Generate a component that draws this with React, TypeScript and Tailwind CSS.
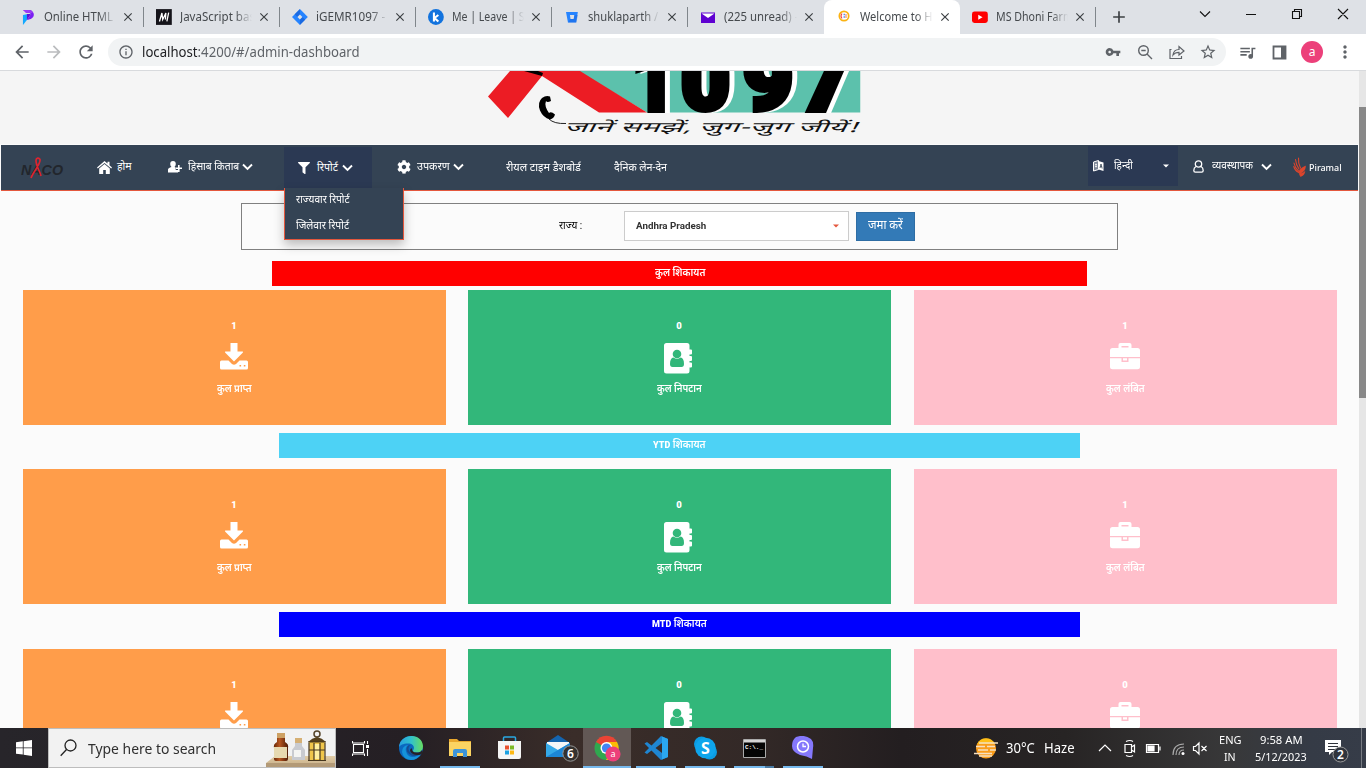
import React, { useLayoutEffect, useRef } from "react";
import {
  MdArrowBack,
  MdArrowForward,
  MdRefresh,
  MdInfoOutline,
  MdVpnKey,
  MdStarBorder,
  MdQueueMusic,
  MdMoreVert,
  MdClose,
  MdAdd,
} from "react-icons/md";
import { FaCog, FaFilter } from "react-icons/fa";

/* Single line of text that is scaled horizontally to fill the given width. */
function Fit({ w, className = "", children }: { w: number; className?: string; children: React.ReactNode }) {
  const ref = useRef<HTMLSpanElement>(null);
  useLayoutEffect(() => {
    const el = ref.current;
    if (!el) return;
    const apply = () => {
      const natural = el.offsetWidth;
      if (natural) el.style.transform = `scaleX(${w / natural})`;
    };
    apply();
    document.fonts?.ready.then(apply);
  }, [w]);
  return (
    <span className={`block shrink-0 ${className}`} style={{ width: w }}>
      <span ref={ref} className="inline-block origin-left whitespace-nowrap">
        {children}
      </span>
    </span>
  );
}

const ui = "font-['Noto_Sans','Open_Sans',sans-serif]";

function Chevron() {
  return (
    <svg width="11" height="8" viewBox="0 0 11 8" className="shrink-0">
      <path d="M1 1.5 5.5 6 10 1.5" fill="none" stroke="#fff" strokeWidth="1.9" />
    </svg>
  );
}

const tabIcons = [
  <svg key="0" width="16" height="16" viewBox="0 0 16 16">
    <path d="M3 1h6.500A4.500 4.500 0 0 1 14 5.500C14 9 11 10.500 7 11l4-6-3-2z" fill="#7b1ff2" />
    <path d="M3 1h6q3 0 4 3H6z" fill="#9a3cf7" />
    <path d="M3 6l5-1-1 6-4 5z" fill="#12a8ff" />
    <path d="M7 5h4l-4 6z" fill="#5a12d8" />
  </svg>,
  <svg key="1" width="16" height="16" viewBox="0 0 16 16">
    <path d="M0 0h16v16H0z" fill="#15141a" />
    <path d="M3.500 12.500 6 4l.8 6.500L10 4l-.5 6.500M12.800 3.500l-1.800 9" fill="none" stroke="#fff" strokeWidth="1.300" />
  </svg>,
  <svg key="2" width="16" height="16" viewBox="0 0 16 16">
    <path d="M8 0l8 8-8 8-8-8z" fill="#2684ff" />
    <path d="M8 0v5.500L5.500 8 2.700 5.300zM8 16v-5.500L10.500 8l2.800 2.700z" fill="#1259cf" opacity=".6" />
    <path d="M8 5.500 10.500 8 8 10.500 5.500 8z" fill="#dee1e6" />
  </svg>,
  <svg key="3" width="16" height="16" viewBox="0 0 16 16">
    <circle cx="8" cy="8" r="8" fill="#1273de" />
    <path d="M6 3.500v9M10.500 6 6.500 9l4 3.500" fill="none" stroke="#fff" strokeWidth="2.100" />
  </svg>,
  <svg key="4" width="16" height="16" viewBox="0 0 16 16">
    <path d="M2 3h12l-1.700 10.500H4z" fill="#2684ff" />
    <path d="M6 6h4.500l-.7 4H6.600z" fill="#dee1e6" />
    <path d="M10.500 6H14l-1.500 7.500H4L6.600 10h3.200z" fill="#1660d6" opacity=".4" />
  </svg>,
  <svg key="5" width="16" height="16" viewBox="0 0 16 16">
    <path d="M1 3.500h14V14H1z" fill="#5f01d1" />
    <path d="M1.500 4.500h13L8 9z" fill="#fff" />
  </svg>,
  <svg key="6" width="16" height="16" viewBox="0 0 16 16">
    <circle cx="8" cy="7" r="4.700" fill="#fff" stroke="#fbb313" strokeWidth="1.700" />
    <path d="M6 4.500q-2 2.500 0 5" fill="none" stroke="#ef4444" strokeWidth="1.100" />
    <path d="M7.500 5.500h1.500M7.500 8h1.500" stroke="#5b8def" strokeWidth="1.300" />
    <path d="M10 5v4" stroke="#ef7d4a" strokeWidth="1" />
  </svg>,
  <svg key="7" width="16" height="16" viewBox="0 0 16 16">
    <rect x="0" y="2.500" width="16" height="11.500" rx="2.500" fill="#f00" />
    <path d="M6.300 5.800v5L10.700 8.300z" fill="#fff" />
  </svg>,
];

const tabs: { t: string; w: number }[] = [
  { t: "Online HTML", w: 69 },
  { t: "JavaScript bas", w: 75 },
  { t: "iGEMR1097 -", w: 69 },
  { t: "Me | Leave | S", w: 73 },
  { t: "shuklaparth /", w: 70 },
  { t: "(225 unread) -", w: 74 },
  { t: "Welcome to H", w: 73 },
  { t: "MS Dhoni Farm", w: 77 },
];

function TabStrip() {
  return (
    <div className="flex h-[34px] bg-[#dee1e6] pl-2">
      {tabs.map((tab, i) => {
        const active = i === 6;
        return (
          <div
            key={tab.t}
            className={`flex h-[34px] w-[136px] shrink-0 items-center pl-3 ${active ? "rounded-t-lg bg-white" : ""}`}
          >
            {tabIcons[i]}
            <div className="ml-2 w-[73px] overflow-hidden [mask-image:linear-gradient(to_right,#000_76%,transparent)]">
              <Fit w={tab.w} className="text-[12px] leading-[18px] text-[#45494d]">
                {tab.t}
              </Fit>
            </div>
            <MdClose className="ml-[5px] h-[14px] w-[14px] shrink-0 text-[#3c4043]" />
            {!active && i !== 5 && <div className="ml-[8px] h-5 w-px shrink-0 bg-[#80868b]" />}
          </div>
        );
      })}
      <MdAdd className="ml-[13px] mt-[7px] h-5 w-5 text-[#3c4043]" />
      <div className="flex-1" />
      <svg width="160" height="34" viewBox="1192 0 160 34" fill="none" stroke="#111" strokeWidth="1.1">
        <path d="M1200 11.5l5 5 5-5" />
        <path d="M1246 14.5h10M1292.5 11.5h7v7h-7zM1294.5 11.500v-2h7v7h-2M1338 9l10 10M1348 9l-10 10" />
      </svg>
      <div className="w-[14px]" />
    </div>
  );
}

function Toolbar() {
  return (
    <div className="flex h-[37px] items-center border-b border-[#d8dadd] bg-white pl-[12px] text-[#5f6368]">
      <MdArrowBack className="h-5 w-5" />
      <MdArrowForward className="ml-3 h-5 w-5 text-[#babcbe]" />
      <MdRefresh className="ml-3 h-5 w-5" />
      <div className="ml-3 flex h-7 w-[1118px] items-center rounded-full bg-[#f1f3f4] pl-[10px] pr-[9px]">
        <MdInfoOutline className="h-4 w-4" />
        <Fit w={218} className="ml-2 text-[14px] leading-5">
          <span className="text-[#202124]">localhost</span>:4200/#/admin-dashboard
        </Fit>
        <div className="flex-1" />
        <MdVpnKey className="h-4 w-4" />
        <svg width="16" height="16" viewBox="0 0 16 16" className="ml-4" fill="none" stroke="#5f6368" strokeWidth="1.4">
          <circle cx="6.5" cy="6.500" r="4.800" />
          <path d="M10 10l5 5M4.300 6.500h4.400" />
        </svg>
        <svg width="16" height="16" viewBox="0 0 16 16" className="ml-4" fill="none" stroke="#5f6368" strokeWidth="1.200">
          <path d="M2.500 5.500H1v9h11.500V12" />
          <path d="M4 11c.5-4 3-5.500 6-5.500V2.500L15 7l-5 4V8.300C7.500 8.300 5.500 9 4 11z" />
        </svg>
        <MdStarBorder className="ml-[14px] h-[18px] w-[18px]" />
      </div>
      <MdQueueMusic className="ml-[12px] h-[19px] w-[19px]" />
      <svg width="15" height="15" viewBox="0 0 15 15" className="ml-[15px]">
        <path d="M1.500 1.500h12v12h-12z" fill="none" stroke="#5f6368" strokeWidth="1.800" />
        <path d="M9 1h5v13H9z" fill="#5f6368" />
      </svg>
      <div className="ml-[14px] flex h-[22px] w-[22px] items-center justify-center rounded-full bg-[#ec407a] pb-px text-[12px] text-white">
        a
      </div>
      <MdMoreVert className="ml-[12px] h-5 w-5" />
    </div>
  );
}

function Banner1097() {
  return (
    <div className="flex h-[73px] bg-[#f5f5f5] pl-[480px]">
      <svg width="390" height="73" viewBox="480 71 390 73">
        <path d="M578 71H860.500V112.500H647z" fill="#5cc1ac" />
        <g
          stroke="#000"
          strokeWidth="6"
          className="font-['Roboto',sans-serif] text-[84px] font-black [filter:drop-shadow(5px_0_0_#fff)]"
        >
          <text x="632" y="109.500" textLength="43" lengthAdjust="spacingAndGlyphs">1</text>
          <text x="681" y="108.500" textLength="49" lengthAdjust="spacingAndGlyphs">0</text>
          <text x="743" y="108.500" textLength="50" lengthAdjust="spacingAndGlyphs">9</text>
          <text x="801" y="109.500" textLength="49" lengthAdjust="spacingAndGlyphs">7</text>
        </g>
        <path d="M860.500 71h10v42h-10z" fill="#f5f5f5" />
        <path d="M510 71H580L647 112.500H599L542 76 508 118 488 96.500z" fill="#ec1c24" />
        <path d="M524 71h14l5 2-1 3z" fill="#000" />
        <path d="M542 98q4-3 8-1.500l1 4.500q-4 2-5 0-2 5 3 12 2-2 6 1.500-1 4-5 5-7-2-10-9-3-8 2-12.500z" fill="#000" />
        <path d="M549 119q5 5 17 4.500" fill="none" stroke="#222" strokeWidth="1" />
        <text
          x="564"
          y="132"
          textLength="294"
          lengthAdjust="spacingAndGlyphs"
          className="font-['Noto_Sans_Devanagari','Noto_Sans',sans-serif] text-[14px] italic"
          fill="#111"
        >
          जानें समझें, जुग-जुग जीयें!
        </text>
      </svg>
    </div>
  );
}

function NavBar() {
  return (
    <nav className="ml-px mt-px flex h-[46px] w-[1357px] border-b border-[#e4573d] bg-[#344354] text-[10.500px] leading-4 text-white">
      <div className="flex w-[96px] items-center pl-[20px]">
        <svg width="43" height="26" viewBox="0 0 43 26">
          <text
            x="0"
            y="19.500"
            textLength="42"
            lengthAdjust="spacingAndGlyphs"
            fill="#22262c"
            className="font-['Liberation_Sans',sans-serif] text-[14px] font-bold italic"
          >
            NACO
          </text>
          <path
            d="M10 23C12 17 20 9 19 4.500c-1-2-4-2-4 1C15 11 19 16 20 21"
            fill="none"
            stroke="#dc2430"
            strokeWidth="1.700"
          />
        </svg>
      </div>
      <div className="flex h-11 w-[71px] items-center">
        <svg width="15" height="13" viewBox="0 0 15 13" className="mr-[5px] shrink-0" fill="#fff">
          <path d="M7.500 0 0 6.500l.8 1L7.500 2l6.700 5.500.8-1L12.500 4.300V.8h-2v1.800zM7.500 3 2.200 7.500V13h4V9h2.600v4h4V7.500z" />
        </svg>
        <Fit w={15}>होम</Fit>
      </div>
      <div className="flex h-11 w-[116px] items-center">
        <svg width="14" height="12" viewBox="0 0 14 12" className="mr-[6px] shrink-0" fill="#fff">
          <path d="M5 0a2.800 3 0 0 1 2.800 3Q7.700 5 6.500 6l1.200.6V9H10v2.500H0V8.500Q0 7 3.500 6 2.200 5 2.200 3A2.800 3 0 0 1 5 0zM10 4h1.600v2.500H14v1.600h-2.400V11H10V8.100H8V6.500h2z" />
        </svg>
        <Fit w={51}>हिसाब किताब</Fit>
        <span className="ml-[3px]"><Chevron /></span>
      </div>
      <div className="relative mt-[2px] flex h-[41px] w-[88px] items-center bg-[#2b3953] pl-[14px]">
        <FaFilter className="mr-[7px] h-3 w-3 shrink-0" />
        <Fit w={21}>रिपोर्ट</Fit>
        <span className="ml-[4px]"><Chevron /></span>
        <div className="absolute left-0 top-[41px] z-10 flex h-[52px] w-[120px] flex-col gap-[10px] border-x border-b border-[#e4573d] bg-[#344354] pl-[11px] pt-1 shadow-[0_5px_10px_rgba(0,0,0,0.25)]">
          <Fit w={54}>राज्यवार रिपोर्ट</Fit>
          <Fit w={53}>जिलेवार रिपोर्ट</Fit>
        </div>
      </div>
      <div className="flex h-11 w-[134px] items-center pl-[25px]">
        <FaCog className="mr-[6px] h-[14px] w-[14px] shrink-0" />
        <Fit w={33}>उपकरण</Fit>
        <span className="ml-[3px]"><Chevron /></span>
      </div>
      <div className="flex h-[45px] w-[108px] items-center">
        <Fit w={75}>रीयल टाइम डैशबोर्ड</Fit>
      </div>
      <div className="flex h-[45px] items-center">
        <Fit w={53}>दैनिक लेन-देन</Fit>
      </div>
      <div className="flex-1" />
      <div className="mt-px flex h-10 w-[90px] items-center bg-[#2b3953] pl-[5px]">
        <svg width="11" height="12" viewBox="0 0 11 12" className="shrink-0">
          <path d="M.5 2 5.500.5v9L.5 11z" fill="#7d8798" stroke="#fff" />
          <path d="M5.500 1 10.500 2.500V11L5.500 9.500z" fill="#fff" />
          <path d="M2 4.500h2M2 6.500h2M3 3.500v4" stroke="#fff" strokeWidth=".7" />
          <path d="M7 8l1-4 1.200 4.500M7.300 6.700H9" stroke="#344354" strokeWidth=".8" fill="none" />
        </svg>
        <Fit w={19} className="ml-[10px]">हिन्दी</Fit>
        <svg width="6" height="4" viewBox="0 0 6 4" className="ml-[30px]">
          <path d="M0 .5h6L3 3.500z" fill="#fff" />
        </svg>
      </div>
      <div className="flex h-[42px] w-[115px] items-center pl-[15px]">
        <svg width="11" height="13" viewBox="0 0 11 13" fill="none" stroke="#fff" strokeWidth="1.300" className="shrink-0">
          <circle cx="5.500" cy="4" r="3.200" />
          <path d="M3 6.500Q.8 7.500.8 10.500q0 1.700 1.500 1.700h6.400q1.500 0 1.500-1.700 0-3-2.200-4" />
        </svg>
        <Fit w={41} className="ml-[8px]">व्यवस्थापक</Fit>
        <span className="ml-[8px] mt-px"><Chevron /></span>
      </div>
      <div className="flex h-11 w-[65px] items-center">
        <svg width="14" height="21" viewBox="0 0 14 21" fill="none" stroke="#dd452c" strokeLinecap="round" className="shrink-0">
          <path d="M1 6q1 5 4.500 8M2.500 2.500Q3 8 6 12M5.500 1Q5 6 7.500 11" strokeWidth="1.100" />
          <path d="M.8 9.500q1 4 5 6" strokeWidth="1.100" />
          <path d="M6 14.500q.5-3 6.500-5.500.5 4.500-5 7.500 3-.5 4.500-2-1 4.500-4.500 5Q6 17.500 6 14.500z" fill="#dd452c" strokeWidth=".6" />
        </svg>
        <Fit w={33} className="ml-[2px] pt-px font-['Noto_Sans'] text-[9.500px] font-medium">Piramal</Fit>
      </div>
    </nav>
  );
}

function DownloadIcon() {
  return (
    <svg width="28" height="27" viewBox="0 0 28 27" fill="#fff">
      <path d="M10.500 0h7v8.500h5.200q.8.500 0 1.300L14 18.500 5.300 9.800q-.8-.8 0-1.300h5.200z" />
      <path d="M1.500 17.500h7l3.500 3.500q2 1.600 4 0l3.500-3.500h7Q28 17.500 28 19v6q0 1.500-1.500 1.500h-25Q0 26.500 0 25v-6q0-1.500 1.500-1.500zM19.500 22v1.600h1.600V22zM23.800 22v1.600h1.600V22z" fillRule="evenodd" />
    </svg>
  );
}

function BriefcaseIcon() {
  return (
    <svg width="30" height="27" viewBox="0 0 30 27" fill="#fff">
      <path d="M8.500 5V2Q8.500 0 10.500 0h9q2 0 2 2v3h6q2.500 0 2.500 2.500V14H0V7.500Q0 5 2.500 5zM11.500 3v1.500h7V3z" fillRule="evenodd" />
      <path d="M0 15.200h11.500V19h7v-3.800H30v9q0 2-2.500 2h-25Q0 26.200 0 24.200zM13 15.200h4v2.300h-4z" />
    </svg>
  );
}

function AddressBookIcon() {
  return (
    <svg width="29" height="31" viewBox="0 0 29 31">
      <path
        d="M2.500 0H23q2.500 0 2.500 2.500V6.500h1.500q1 0 1 1v3q0 1-1 1h-1.500v1.500h1.500q1 0 1 1v3q0 1-1 1h-1.500v1.500h1.500q1 0 1 1v3q0 1-1 1h-1.500V28q0 2.500-2.500 2.500H2.500Q0 30.500 0 28V2.500Q0 0 2.500 0z"
        fill="#fff"
      />
      <circle cx="13" cy="11" r="4.300" fill="#32b77a" />
      <path d="M9.500 14.500q3.500 2.500 7 0 3.500.5 3.500 6.500 0 3-2.500 3h-9Q6 24 6 21q0-6 3.500-6.500z" fill="#32b77a" />
    </svg>
  );
}

function Tile({ n, kind }: { n: number; kind: "in" | "done" | "open" }) {
  const bg = { in: "bg-[#ff9d4a]", done: "bg-[#32b77a]", open: "bg-[#ffbfcb]" }[kind];
  return (
    <div className={`flex h-[135px] w-[423px] flex-col items-center text-white ${bg}`}>
      <div className="mt-[28px] pr-px font-['Roboto'] text-[9.500px] font-black leading-4">{n}</div>
      <div className="flex h-[48px] items-center justify-center pr-[2px]">
        {kind === "in" && <span className="-mt-[3px]"><DownloadIcon /></span>}
        {kind === "done" && <AddressBookIcon />}
        {kind === "open" && <span className="-mt-[3px]"><BriefcaseIcon /></span>}
      </div>
      <div className="flex pr-px text-[10.500px] font-semibold leading-[14px]">
        {kind === "in" && <Fit w={35}>कुल प्राप्त</Fit>}
        {kind === "done" && <Fit w={45}>कुल निपटान</Fit>}
        {kind === "open" && <Fit w={39}>कुल लंबित</Fit>}
      </div>
    </div>
  );
}

function Tiles({ last, className }: { last: number; className: string }) {
  return (
    <div className={`flex pl-[23px] ${className}`}>
      <Tile n={1} kind="in" />
      <div className="w-[22px]" />
      <Tile n={0} kind="done" />
      <div className="w-[23px]" />
      <Tile n={last} kind="open" />
    </div>
  );
}

function Page() {
  return (
    <div className="flex h-[657px]">
      <main className="h-[657px] w-[1359px] overflow-hidden bg-[#fbfbfb] font-['Roboto','Noto_Sans_Devanagari','Noto_Sans',sans-serif]">
        <Banner1097 />
        <NavBar />
        <section className="ml-[241px] mt-3 flex h-[47px] w-[877px] items-start border border-[#808080] text-[10.500px] text-black">
          <Fit w={23} className="ml-[317px] mt-[14px] leading-4">राज्य :</Fit>
          <div className="ml-[42px] mt-[7px] flex h-[30px] w-[225px] items-center border border-[#ccc] bg-white px-[11px]">
            <Fit w={70} className="text-[9.500px] font-bold text-[#333]">Andhra Pradesh</Fit>
            <div className="flex-1" />
            <svg width="6" height="4" viewBox="0 0 6 4" className="-mr-[2px]">
              <path d="M0 .5h6L3 3.500z" fill="#e4573d" />
            </svg>
          </div>
          <button className="ml-[7px] mt-2 flex h-[29px] w-[59px] items-center justify-center border border-[#2e6da4] bg-[#337ab7] pb-[2px] text-[12.500px] text-white">
            <Fit w={35}>जमा करें</Fit>
          </button>
        </section>
        <div className="ml-[272px] mt-[11px] flex h-[25px] w-[815px] items-start justify-center bg-[#f00] pt-1 text-[10.500px] font-semibold leading-4 text-white">
          <Fit w={50}>कुल शिकायत</Fit>
        </div>
        <Tiles last={1} className="mt-1" />
        <div className="ml-[279px] mt-2 flex h-[25px] w-[801px] items-start justify-center bg-[#4dd2f5] pt-1 text-[10.500px] font-semibold leading-4 text-white">
          <Fit w={53}><span className="text-[9.500px] font-black">YTD</span> शिकायत</Fit>
        </div>
        <Tiles last={1} className="mt-[11px]" />
        <div className="ml-[279px] mt-2 flex h-[25px] w-[801px] items-start justify-center bg-[#00f] pt-1 text-[10.500px] font-semibold leading-4 text-white">
          <Fit w={55}><span className="text-[9.500px] font-black">MTD</span> शिकायत</Fit>
        </div>
        <Tiles last={0} className="mt-3" />
      </main>
      <div className="w-[7px] bg-[#e6e6e6] pt-9">
        <div className="h-[291px] bg-[#888]" />
      </div>
    </div>
  );
}

function TaskButton({ children, open = true, active = false, split = false }: { children: React.ReactNode; open?: boolean; active?: boolean; split?: boolean }) {
  return (
    <div className={`flex h-10 w-12 shrink-0 flex-col items-center ${active ? "bg-[#625855]" : ""}`}>
      <div className="flex h-[38px] items-center pt-[2px]">{children}</div>
      {open && (
        <div className={`flex h-[2px] bg-[#76b9ed] ${active ? "w-12" : "w-10"}`}>
          {split && <div className="ml-auto w-[9px] bg-[#4a7ba4]" />}
        </div>
      )}
    </div>
  );
}

function Taskbar() {
  return (
    <footer className={`flex h-10 bg-[linear-gradient(90deg,#27252a_0%,#251f24_30%,#3a2d29_42%,#332927_55%,#231e20_66%,#272424_78%,#383839_90%,#353b46_96%,#363c48_100%)] text-white ${ui}`}>
      <div className="flex w-12 items-center justify-center">
        <svg width="16" height="16" viewBox="0 0 16 16" fill="#fff">
          <path d="M0 2.300 6.800 1.300V7.500H0zM7.600 1.200 16 0v7.500H7.600zM0 8.300h6.800v6.300L0 13.700zM7.600 8.300H16V16l-8.400-1.200z" />
        </svg>
      </div>
      <div className="flex w-[288px] items-center overflow-hidden border border-[#bdbdbd] bg-[#f2f2f2] pl-[11px]">
        <svg width="17" height="18" viewBox="0 0 17 18" fill="none" stroke="#222" strokeWidth="1.300">
          <circle cx="10.500" cy="6.500" r="5.500" />
          <path d="M6.500 10.500.7 16.800" />
        </svg>
        <Fit w={128} className="ml-[11px] text-[15px] leading-5 text-[#303030]">Type here to search</Fit>
        <svg width="69" height="38" viewBox="267 729 69 38" className="ml-auto shrink-0">
          <defs>
            <linearGradient id="shelf" x1="0" x2="0" y1="0" y2="1">
              <stop offset="0" stopColor="#e2cda6" />
              <stop offset="1" stopColor="#c2a983" />
            </linearGradient>
            <linearGradient id="amber">
              <stop offset="0" stopColor="#672808" />
              <stop offset=".4" stopColor="#b75721" />
              <stop offset="1" stopColor="#4d1b07" />
            </linearGradient>
          </defs>
          <path d="M267 763l9-7h60v12h-69z" fill="url(#shelf)" />
          <path d="M267 763h69v5h-69z" fill="#b39a77" />
          <path d="M278 738h8v4q4 2 3 6v11q0 2-2 2h-10q-2 0-2-2v-11q-1-4 3-6z" fill="url(#amber)" />
          <path d="M278 733h8v5h-8z" fill="#cda164" />
          <path d="M275 747h13v11h-13z" fill="#e6d9b0" />
          <path d="M296 743h7v3l3 4v10h-13v-10l3-4z" fill="#c9cbd0" />
          <path d="M296 738h7v5h-7z" fill="#d6b074" />
          <path d="M295 750h7v7h-7z" fill="#f4f4f2" />
          <circle cx="318" cy="734" r="3" fill="none" stroke="#55442a" strokeWidth="1.500" />
          <path d="M309 742q4-4 9-5 5 1 9 5z" fill="#55401d" />
          <path d="M310 742h16l-1 19h-14z" fill="#f0c64b" />
          <path d="M315 744h6v15h-6z" fill="#fff0a0" />
          <path d="M309 742h18M310 743v17M315 743v17M321 743v17M326 743v17M310 750h16M309 760.500h18" stroke="#46361d" strokeWidth="1.200" />
        </svg>
      </div>
      <div className="flex w-[51px] items-center pl-4">
        <svg width="17" height="17" viewBox="0 0 17 17" fill="none" stroke="#fff" strokeWidth="1.100">
          <path d="M1.500 4.500h10v8h-10zM.5 1v2h12V1M.5 16v-2h12v2M15.500 1v3M15.500 9v7" />
          <path d="M14 5h3v3h-3z" fill="#fff" stroke="none" />
        </svg>
      </div>
      <div className="flex gap-px">
        <TaskButton open={false}>
          <svg width="24" height="24" viewBox="0 0 24 24">
            <defs>
              <linearGradient id="edgeTop">
                <stop offset="0" stopColor="#279fe0" />
                <stop offset=".5" stopColor="#31c1cc" />
                <stop offset="1" stopColor="#68dd5e" />
              </linearGradient>
            </defs>
            <circle cx="12" cy="12" r="12" fill="#0b68bf" />
            <path d="M0 11C1-3 23-4 24 10q0 6-6 6.500-4 0-4.500-1.500c3-3 1-7-3-7.500C5 7 1 9 0 11z" fill="url(#edgeTop)" />
            <path d="M9 9q-4 3-1 9 4 6 14 0-4 6-10 6-8-1-9-8 0-6 6-7z" fill="#1593db" />
            <path d="M11.500 9Q8 12 10.500 15.500q4 5 12 1.500-5 5-10 2.500Q6 16 8 11q1-2 3.500-2z" fill="#174c91" />
            <path d="M13.500 15q1.500 2 6 1.500 2.500-.5 3.500-2.500l1 2.500-2 2q-8 2-11-3.500 0-2 1.500-3z" fill="#272126" />
          </svg>
        </TaskButton>
        <TaskButton>
          <svg width="22" height="18" viewBox="0 0 22 18">
            <path d="M0 0h8l2 2h12v15H0z" fill="#e9a82d" />
            <path d="M0 3h22v14H0z" fill="#fcd462" />
            <path d="M4 18v-6q0-2 2-2h10q2 0 2 2v6h-4v-4H8v4z" fill="#3d94d9" />
          </svg>
        </TaskButton>
        <TaskButton open={false}>
          <svg width="23" height="24" viewBox="0 0 23 24">
            <path d="M5.500 6V2q0-1 1-1h10q1 0 1 1v4" fill="none" stroke="#2aa8e2" strokeWidth="1.500" />
            <path d="M0 5h23v16q0 2-2 2H2q-2 0-2-2z" fill="#f5f5f5" />
            <path d="M7 9.500h4v4H7z" fill="#e8502e" /><path d="M12 9.500h4v4h-4z" fill="#7dba26" />
            <path d="M7 14.500h4v4H7z" fill="#1ba1e2" /><path d="M12 14.500h4v4h-4z" fill="#fdb813" />
          </svg>
        </TaskButton>
        <TaskButton open={false}>
          <svg width="34" height="28" viewBox="0 0 34 28" className="ml-2">
            <path d="M1 9 13 1l12 8v14H1z" fill="#1464ae" />
            <path d="M2 8h22v10H2z" fill="#f4f6f8" />
            <path d="M1 9l12 7 12-7v14H1z" fill="#35a9e8" />
            <path d="M1 23 25 9v14z" fill="#1c86d6" />
            <circle cx="25.500" cy="19.500" r="7.700" fill="#34312f" stroke="#969696" />
            <text x="25.500" y="24" textAnchor="middle" fill="#fff" className="text-[12px] font-semibold">6</text>
          </svg>
        </TaskButton>
        <TaskButton active>
          <svg width="27" height="27" viewBox="0 0 27 27">
            <circle cx="12.500" cy="13" r="12" fill="#2fa84f" />
            <path d="M12.500 13 2 7A12 12 0 0 1 23 7z" fill="#ea4335" />
            <path d="M13 7h10a12 12 0 0 1-11 18l5-9z" fill="#fbbc05" />
            <circle cx="12.500" cy="13" r="6" fill="#fff" />
            <circle cx="12.500" cy="13" r="4.600" fill="#4285f4" />
            <circle cx="19" cy="19" r="7.600" fill="#ec407a" />
            <text x="19" y="22" textAnchor="middle" fill="#fff" className="text-[9px]">a</text>
          </svg>
        </TaskButton>
        <TaskButton>
          <svg width="24" height="24" viewBox="0 0 24 24">
            <path d="M17 0l7 3v18l-7 3L7.500 14.500 3 18l-2.500-1.500L5 12 .5 7.500 3 6l4.500 3.500zM18 7l-6.500 5 6.500 5z" fill="#1f86d2" fillRule="evenodd" />
            <path d="M18 .5l6 2.500v18l-6 2.500z" fill="#2ba7ef" />
          </svg>
        </TaskButton>
        <TaskButton>
          <svg width="23" height="24" viewBox="0 0 23 24">
            <circle cx="7.500" cy="8" r="7.500" fill="#0b9ce3" /><circle cx="15.500" cy="16" r="7.500" fill="#0b9ce3" />
            <circle cx="11.500" cy="12" r="10.300" fill="#0ea5ec" />
            <text x="11.500" y="17.500" textAnchor="middle" fill="#fff" className="text-[16px] font-bold">S</text>
          </svg>
        </TaskButton>
        <TaskButton split>
          <svg width="23" height="19" viewBox="0 0 23 19">
            <path d="M.5.500h22v18H.5z" fill="#050505" stroke="#aaa" />
            <path d="M1 1h21v2.500H1z" fill="#d4d4d4" />
            <text x="2" y="9.500" fill="#fff" className="font-['Liberation_Mono'] text-[6px] font-bold">C:\._</text>
          </svg>
        </TaskButton>
        <TaskButton>
          <svg width="22" height="24" viewBox="0 0 22 24">
            <path d="M4 1q8-3 15 2 3 3 2 9l-1 11q-5-3-12-4-8-3-8-9 0-6 4-9z" fill="#8578fc" />
            <circle cx="11" cy="10.500" r="5.500" fill="none" stroke="#fff" strokeWidth="1.500" />
            <path d="M11 7.500v3h3" fill="none" stroke="#fff" strokeWidth="1.300" />
          </svg>
        </TaskButton>
      </div>
      <div className="flex-1" />
      <div className="flex w-[392px] shrink-0 items-center">
        <svg width="24" height="21" viewBox="0 0 24 21">
          <circle cx="12" cy="10.500" r="10" fill="#f99d1c" />
          <path d="M3 6a10 10 0 0 1 18 0z" fill="#ffbf18" />
          <path d="M5 5h19M2 8.500h9M13 8.500h8M4 12h10M16 12h6M0 15.500h18M5 18h13" stroke="#f5dfc0" strokeWidth="1.300" />
        </svg>
        <Fit w={29} className="ml-[8px] text-[13.500px]">30°C</Fit>
        <Fit w={31} className="ml-[9px] text-[13.500px]">Haze</Fit>
        <svg width="120" height="24" viewBox="1096 736 120 24" className="ml-[21px]" fill="none" stroke="#fff" strokeWidth="1.200">
          <path d="M1099 751l6-6 6 6" />
          <path d="M1125 744.500h6.500v8h-6.500zM1131.500 747l3-2v7l-3-2M1126 741.500q4-2 7 0M1126 755.500q4 2 7 0" />
          <path d="M1146.500 744.500h12v8h-12zM1160 746.500v4" />
          <path d="M1148 746h6v5h-6z" fill="#fff" />
          <path d="M1173 755q0-11 11-11M1176 755q0-8 8-8M1179 755q0-5 5-5" stroke="#aaa" />
          <circle cx="1183" cy="753.500" r="1.500" fill="#fff" stroke="none" />
          <path d="M1193.500 746.500h2l3.500-3.500v11l-3.500-3.500h-2zM1201.500 746l5 5M1206.500 746l-5 5" />
        </svg>
        <div className="ml-[2px] flex w-6 flex-col items-center pb-px text-[11.500px] leading-[17px]">
          <Fit w={23}>ENG</Fit>
          <Fit w={12}>IN</Fit>
        </div>
        <div className="ml-[13px] flex w-[52px] flex-col items-center pb-px text-[11.500px] leading-[17px]">
          <Fit w={43}>9:58 AM</Fit>
          <Fit w={52}>5/12/2023</Fit>
        </div>
        <svg width="28" height="28" viewBox="0 0 28 28" className="ml-4 mt-2">
          <path d="M2 2h16v12H9l-3 3v-3H2z" fill="#fff" />
          <path d="M5 5.500h10M5 8.500h10M5 11.500h7" stroke="#30343c" />
          <circle cx="17.500" cy="16.500" r="7.500" fill="#30343c" stroke="#999" />
          <text x="17.500" y="21" textAnchor="middle" fill="#fff" className="text-[12px] font-semibold">2</text>
        </svg>
        <div className="ml-auto mr-[4px] h-10 w-px bg-[#777b82]" />
      </div>
    </footer>
  );
}

export default function App() {
  return (
    <div className={`h-[768px] w-[1366px] overflow-hidden bg-white ${ui}`}>
      <TabStrip />
      <Toolbar />
      <Page />
      <Taskbar />
    </div>
  );
}
